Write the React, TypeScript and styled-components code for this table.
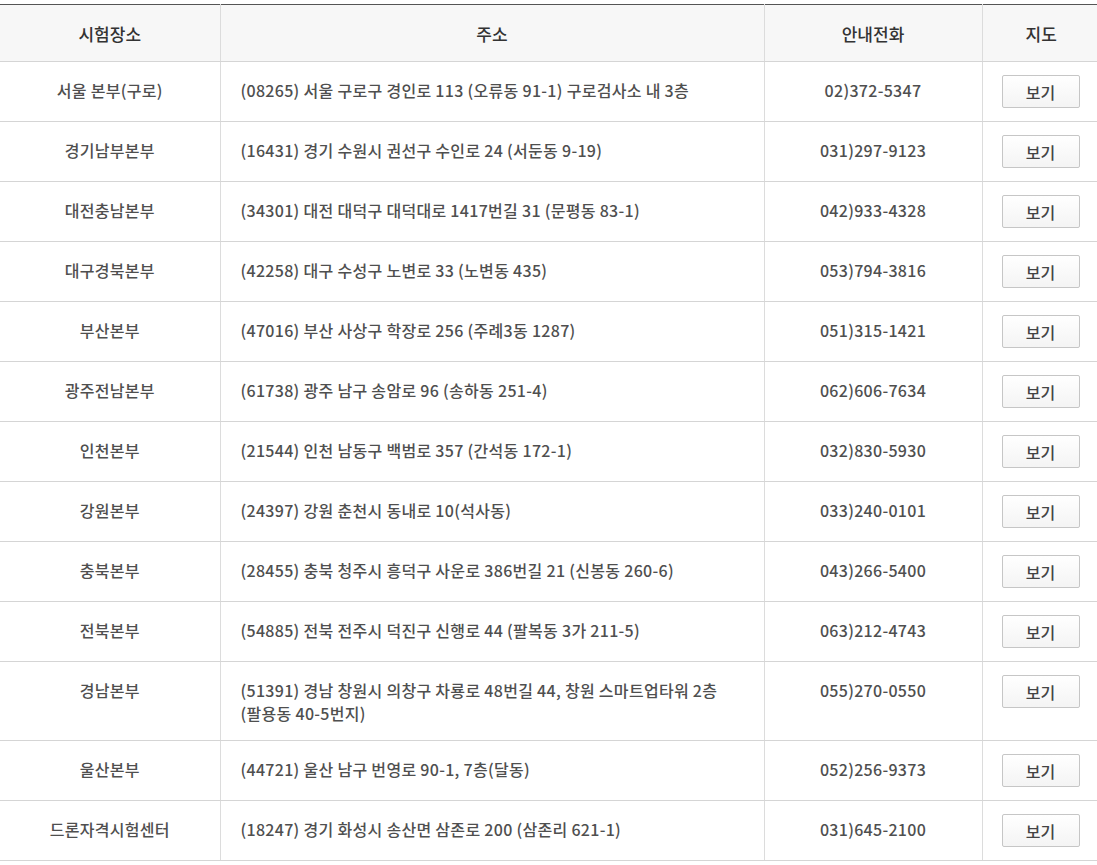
import React from "react";
import styled, { createGlobalStyle } from "styled-components";

const Global = createGlobalStyle`
  html, body { margin: 0; padding: 0; background: #fff; }
  body { font-family: "Noto Sans CJK KR", "Noto Sans", sans-serif; }
`;

const Wrap = styled.div`
  padding-top: 4px;
  width: 1097px;
  overflow: hidden;
`;

const Table = styled.table`
  width: 1100px;
  border-collapse: collapse;
  table-layout: fixed;
  border-top: 1px solid #555;
  font-family: "Noto Sans CJK KR", "Noto Sans", sans-serif;
`;

const Th = styled.th`
  background: #f7f7f7;
  color: #333;
  font-size: 17px;
  font-weight: 500;
  line-height: 23px;
  padding: 17px 10px 16px;
  text-align: center;
  border-bottom: 1px solid #d5d5d5;
  border-left: 1px solid #dcdcdc;
  &:first-child { border-left: none; }
`;

const Td = styled.td<{ $align?: "left" | "center"; $btn?: boolean }>`
  color: #4f4f4f;
  font-size: 16px;
  font-weight: 500;
  line-height: 23px;
  letter-spacing: 0.3px;
  word-break: keep-all;
  vertical-align: top;
  text-align: ${(p) => p.$align ?? "center"};
  padding: ${(p) => (p.$btn ? "13px 10px 13px 19px" : "17px 20px 15px")};
  border-bottom: 1px solid #d5d5d5;
  border-left: 1px solid #dcdcdc;
  &:first-child { border-left: none; }
`;

const ViewButton = styled.button`
  display: block;
  width: 78px;
  height: 33px;
  border: 1px solid #c6c6c6;
  border-radius: 2px;
  background: linear-gradient(#ffffff, #f4f4f4);
  color: #444;
  font-family: "Noto Sans CJK KR", "Noto Sans", sans-serif;
  font-size: 16px;
  font-weight: 500;
  padding: 0;
  cursor: pointer;
`;

const rows: [string, string, string][] = [
  ["서울 본부(구로)", "(08265) 서울 구로구 경인로 113 (오류동 91-1) 구로검사소 내 3층", "02)372-5347"],
  ["경기남부본부", "(16431) 경기 수원시 권선구 수인로 24 (서둔동 9-19)", "031)297-9123"],
  ["대전충남본부", "(34301) 대전 대덕구 대덕대로 1417번길 31 (문평동 83-1)", "042)933-4328"],
  ["대구경북본부", "(42258) 대구 수성구 노변로 33 (노변동 435)", "053)794-3816"],
  ["부산본부", "(47016) 부산 사상구 학장로 256 (주례3동 1287)", "051)315-1421"],
  ["광주전남본부", "(61738) 광주 남구 송암로 96 (송하동 251-4)", "062)606-7634"],
  ["인천본부", "(21544) 인천 남동구 백범로 357 (간석동 172-1)", "032)830-5930"],
  ["강원본부", "(24397) 강원 춘천시 동내로 10(석사동)", "033)240-0101"],
  ["충북본부", "(28455) 충북 청주시 흥덕구 사운로 386번길 21 (신봉동 260-6)", "043)266-5400"],
  ["전북본부", "(54885) 전북 전주시 덕진구 신행로 44 (팔복동 3가 211-5)", "063)212-4743"],
  ["경남본부", "(51391) 경남 창원시 의창구 차룡로 48번길 44, 창원 스마트업타워 2층 (팔용동 40-5번지)", "055)270-0550"],
  ["울산본부", "(44721) 울산 남구 번영로 90-1, 7층(달동)", "052)256-9373"],
  ["드론자격시험센터", "(18247) 경기 화성시 송산면 삼존로 200 (삼존리 621-1)", "031)645-2100"],
];

export default function App() {
  return (
    <>
      <Global />
      <Wrap>
        <Table>
          <colgroup>
            <col style={{ width: 220 }} />
            <col style={{ width: 544 }} />
            <col style={{ width: 218 }} />
            <col style={{ width: 118 }} />
          </colgroup>
          <thead>
            <tr>
              <Th>시험장소</Th>
              <Th>주소</Th>
              <Th>안내전화</Th>
              <Th>지도</Th>
            </tr>
          </thead>
          <tbody>
            {rows.map(([name, addr, tel]) => (
              <tr key={name}>
                <Td>{name}</Td>
                <Td $align="left">{addr}</Td>
                <Td>{tel}</Td>
                <Td $btn>
                  <ViewButton type="button">보기</ViewButton>
                </Td>
              </tr>
            ))}
          </tbody>
        </Table>
      </Wrap>
    </>
  );
}
